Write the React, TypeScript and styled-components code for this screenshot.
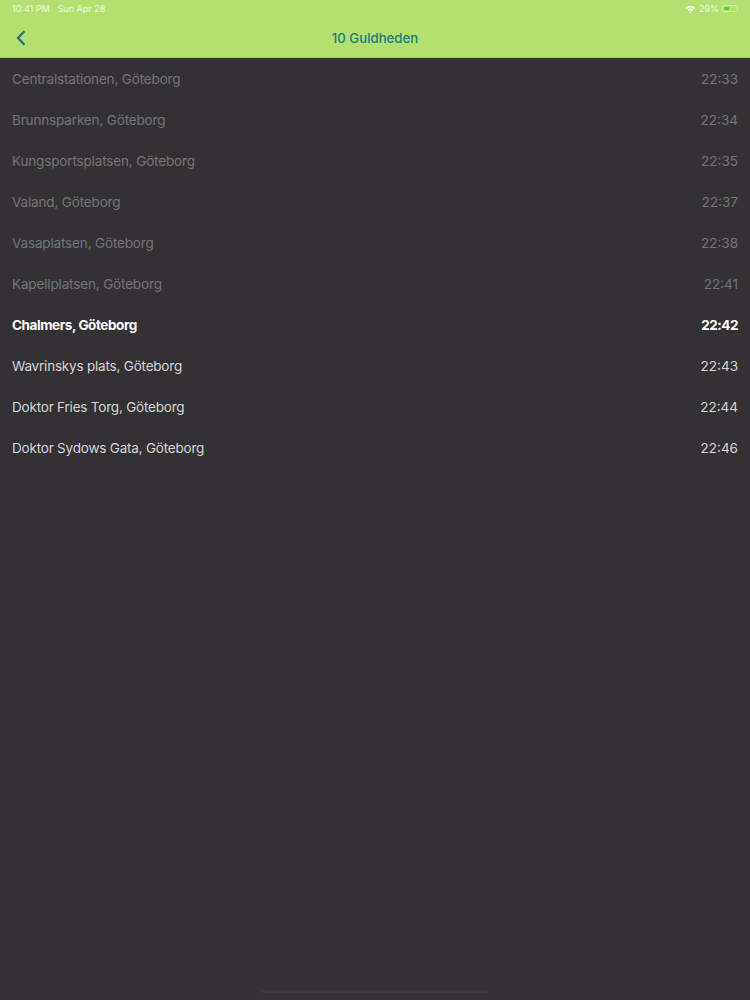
import styled, { createGlobalStyle } from "styled-components";

const stops = [
  { name: "Centralstationen, Göteborg", time: "22:33", state: "passed" },
  { name: "Brunnsparken, Göteborg", time: "22:34", state: "passed" },
  { name: "Kungsportsplatsen, Göteborg", time: "22:35", state: "passed" },
  { name: "Valand, Göteborg", time: "22:37", state: "passed" },
  { name: "Vasaplatsen, Göteborg", time: "22:38", state: "passed" },
  { name: "Kapellplatsen, Göteborg", time: "22:41", state: "passed" },
  { name: "Chalmers, Göteborg", time: "22:42", state: "current" },
  { name: "Wavrinskys plats, Göteborg", time: "22:43", state: "upcoming" },
  { name: "Doktor Fries Torg, Göteborg", time: "22:44", state: "upcoming" },
  { name: "Doktor Sydows Gata, Göteborg", time: "22:46", state: "upcoming" },
];

const colors: Record<string, string> = {
  passed: "#757478",
  current: "#ffffff",
  upcoming: "#d6d5d7",
};

const nameSpacing: Record<string, string> = {
  passed: "-0.15px",
  current: "-0.42px",
  upcoming: "-0.2px",
};

const App = () => {
  return (
    <>
      <GlobalStyle />
      <Page>
        <Header>
          <StatusBar>
            <StatusGroup>
              <span>10:41 PM</span>
              <span>Sun Apr 28</span>
            </StatusGroup>
            <StatusGroup $tight>
              <svg width="11" height="8" viewBox="0 0 11 8">
                <path d="M0.5 2.8 A7.2 7.2 0 0 1 10.5 2.8 L9.3 4 A5.5 5.5 0 0 0 1.7 4 Z" fill="#f1f8e4" />
                <path d="M2.5 4.7 A4.4 4.4 0 0 1 8.5 4.7 L7.3 5.9 A2.8 2.8 0 0 0 3.7 5.9 Z" fill="#f1f8e4" />
                <path d="M4.3 6.5 A1.7 1.7 0 0 1 6.7 6.5 L5.5 7.8 Z" fill="#f1f8e4" />
              </svg>
              <span>29%</span>
              <Battery>
                <BatteryFill />
              </Battery>
            </StatusGroup>
          </StatusBar>
          <NavBar>
            <BackButton aria-label="Back">
              <svg width="10" height="16" viewBox="0 0 10 16" fill="none">
                <path d="M8.5 1.2 L2 8 L8.5 14.8" stroke="#1f7185" strokeWidth="2.2" />
              </svg>
            </BackButton>
            <Title>10 Guldheden</Title>
          </NavBar>
        </Header>
        <StopList>
          {stops.map((stop) => (
            <StopRow key={stop.name} $state={stop.state}>
              <StopName $state={stop.state}>{stop.name}</StopName>
              <StopTime $state={stop.state}>{stop.time}</StopTime>
            </StopRow>
          ))}
        </StopList>
        <HomeIndicator />
      </Page>
    </>
  );
};

export default App;

const GlobalStyle = createGlobalStyle`
  html, body {
    margin: 0;
    padding: 0;
    background: #333133;
  }
`;
const Page = styled.div`
  height: 1000px;
  background-color: #333133;
  font-family: Inter, "Liberation Sans", sans-serif;

  display: flex;
  flex-direction: column;
`;
const Header = styled.header`
  height: 58px;
  background-color: #b3e06f;
  box-shadow: inset 0 -1px 0 #a5cc68;
  flex-shrink: 0;
`;
const StatusBar = styled.div`
  height: 17px;
  padding: 0 12px;
  color: #f1f8e4;
  font-size: 9px;

  display: flex;
  justify-content: space-between;
  align-items: center;
`;
const StatusGroup = styled.div<{ $tight?: boolean }>`
  display: flex;
  align-items: center;
  gap: ${(props) => (props.$tight ? "3px" : "8px")};
`;
const Battery = styled.div`
  width: 16px;
  height: 7px;
  padding: 1px;
  box-sizing: border-box;
  border: 1px solid #d9edb8;
  border-radius: 2px;
`;
const BatteryFill = styled.div`
  width: 45%;
  height: 100%;
  background-color: #58d04e;
`;
const NavBar = styled.div`
  height: 41px;
  padding-left: 16px;
  position: relative;

  display: flex;
  align-items: center;
`;
const BackButton = styled.button`
  padding: 0;
  border: 0;
  background: none;

  display: flex;
`;
const Title = styled.h1`
  margin: 0;
  position: absolute;
  left: 0;
  right: 0;
  text-align: center;
  color: #227a78;
  font-size: 13.2px;
  font-weight: 500;
`;
const StopList = styled.div`
  display: flex;
  flex-direction: column;
`;
const StopRow = styled.div<{ $state: string }>`
  height: 41px;
  padding: 0 12px;
  color: ${(props) => colors[props.$state]};
  font-size: 13.5px;
  font-weight: ${(props) => (props.$state === "current" ? 700 : 400)};

  display: flex;
  justify-content: space-between;
  align-items: center;
`;
const StopName = styled.span<{ $state: string }>`
  letter-spacing: ${(props) => nameSpacing[props.$state]};
`;
const StopTime = styled.span<{ $state: string }>`
  letter-spacing: ${(props) => (props.$state === "current" ? "-0.5px" : "0")};
`;
const HomeIndicator = styled.div`
  width: 228px;
  height: 3px;
  margin: auto auto 7px;
  border-radius: 2px;
  background-color: #3a383a;
`;
